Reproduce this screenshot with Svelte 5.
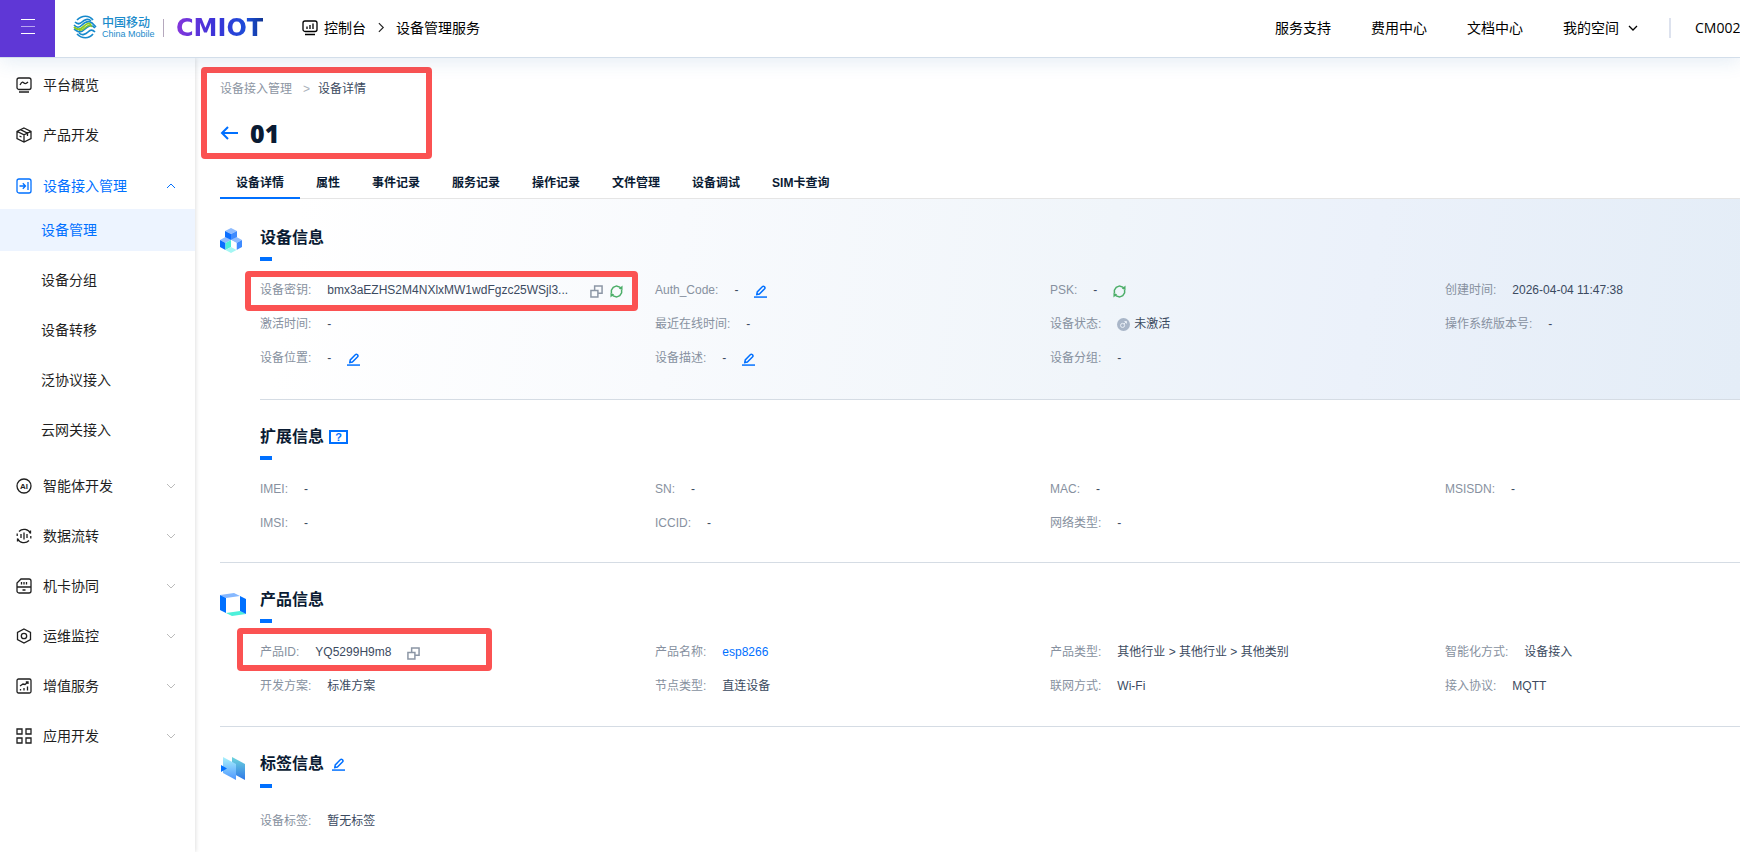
<script lang="ts">
	type NavItem = { label: string; icon: string; mark?: string };
	type Field = {
		label: string;
		value: string;
		actions?: string[];
		link?: boolean;
		status?: boolean;
		long?: boolean;
	};

	const topItems: NavItem[] = [
		{
			label: '平台概览',
			icon: 'M3 1h10a2 2 0 0 1 2 2v7.500a2 2 0 0 1-2 2H3a2 2 0 0 1-2-2V3a2 2 0 0 1 2-2zM3 15h10M4 8c2-4 3-3 4-2s2 1 4-1'
		},
		{
			label: '产品开发',
			icon: 'M8 1l7 3.400v7.200L8 15l-7-3.400V4.400zM1 4.400l7 3.400 7-3.400M8 7.800V15M4.500 2.700l7 3.400v3M3.500 9l2 1'
		}
	];

	const deviceIcon =
		'M3 1h10a2 2 0 0 1 2 2v10a2 2 0 0 1-2 2H3a2 2 0 0 1-2-2V3a2 2 0 0 1 2-2zM3.500 8H9M6.800 5.200L9.500 8l-2.700 2.800M12 4v8';
	const deviceItems = ['设备管理', '设备分组', '设备转移', '泛协议接入', '云网关接入'];

	const bottomItems: NavItem[] = [
		{ label: '智能体开发', icon: 'M8 1a7 7 0 1 1 0 14A7 7 0 0 1 8 1z', mark: 'AI' },
		{
			label: '数据流转',
			icon: 'M3 3.500A7 7 0 0 1 14.500 5.500V2.500M13 12.500A7 7 0 0 1 1.500 10.500v3M1.200 8V5.500M14.800 8v2.500M5 6v4M8 4.500v7M11 6v4'
		},
		{
			label: '机卡协同',
			icon: 'M5 1h8a2 2 0 0 1 2 2v10a2 2 0 0 1-2 2H3a2 2 0 0 1-2-2V5zM1 9h14M5.500 4v2.500M8 4v2.500M10.500 4v2.500M6.500 12h3'
		},
		{
			label: '运维监控',
			icon: 'M8 1l6.500 3.500v7L8 15l-6.500-3.500v-7zM8 5.300a2.700 2.700 0 1 1 0 5.400 2.700 2.700 0 0 1 0-5.400z'
		},
		{
			label: '增值服务',
			icon: 'M2.500 1h11A1.500 1.500 0 0 1 15 2.500v11a1.500 1.500 0 0 1-1.500 1.500h-11A1.500 1.500 0 0 1 1 13.500v-11A1.500 1.500 0 0 1 2.500 1zM4 8l3-2 2 .5L12 4M9.800 4H12v2M4.500 11v1.500M8 10v2.500M11.500 8.500v4'
		},
		{
			label: '应用开发',
			icon: 'M1 1h5v5H1zM10 1h5v5h-5zM1 10h5v5H1zM10 10h5v5h-5z'
		}
	];

	const tabs = [
		'设备详情',
		'属性',
		'事件记录',
		'服务记录',
		'操作记录',
		'文件管理',
		'设备调试',
		'SIM卡查询'
	];

	const deviceFields: Field[] = [
		{
			label: '设备密钥',
			value: 'bmx3aEZHS2M4NXlxMW1wdFgzc25WSjl3...',
			actions: ['copy', 'refresh'],
			long: true
		},
		{ label: 'Auth_Code', value: '-', actions: ['edit'] },
		{ label: 'PSK', value: '-', actions: ['refresh'] },
		{ label: '创建时间', value: '2026-04-04 11:47:38' },
		{ label: '激活时间', value: '-' },
		{ label: '最近在线时间', value: '-' },
		{ label: '设备状态', value: '未激活', status: true },
		{ label: '操作系统版本号', value: '-' },
		{ label: '设备位置', value: '-', actions: ['edit'] },
		{ label: '设备描述', value: '-', actions: ['edit'] },
		{ label: '设备分组', value: '-' }
	];

	const extendedFields: Field[] = [
		{ label: 'IMEI', value: '-' },
		{ label: 'SN', value: '-' },
		{ label: 'MAC', value: '-' },
		{ label: 'MSISDN', value: '-' },
		{ label: 'IMSI', value: '-' },
		{ label: 'ICCID', value: '-' },
		{ label: '网络类型', value: '-' }
	];

	const productFields: Field[] = [
		{ label: '产品ID', value: 'YQ5299H9m8', actions: ['copy'] },
		{ label: '产品名称', value: 'esp8266', link: true },
		{ label: '产品类型', value: '其他行业 > 其他行业 > 其他类别' },
		{ label: '智能化方式', value: '设备接入' },
		{ label: '开发方案', value: '标准方案' },
		{ label: '节点类型', value: '直连设备' },
		{ label: '联网方式', value: 'Wi-Fi' },
		{ label: '接入协议', value: 'MQTT' }
	];

	const tagFields: Field[] = [{ label: '设备标签', value: '暂无标签' }];

	const actionLabels: Record<string, string> = { copy: '复制', refresh: '刷新', edit: '编辑' };

	let activeTab = $state('设备详情');
	let activeItem = $state('设备管理');
	let deviceOpen = $state(true);
</script>

{#snippet navIcon(d: string, mark = '')}
	<svg class="nav-icon" viewBox="0 0 16 16" aria-hidden="true">
		<path {d} />
		{#if mark}<text x="8" y="11" text-anchor="middle">{mark}</text>{/if}
	</svg>
{/snippet}

{#snippet chevron(up: boolean)}
	<svg class="chevron" viewBox="0 0 10 10" aria-hidden="true">
		<path d={up ? 'M1 7l4-4 4 4' : 'M1 3l4 4 4-4'} />
	</svg>
{/snippet}

{#snippet action(kind: string)}
	<button class="action {kind}" type="button" aria-label={actionLabels[kind]}>
		<svg viewBox="0 0 14 14" aria-hidden="true">
			{#if kind === 'copy'}
				<path d="M5 5V1h8v8H9M1 5.800h7.500V13H1z" />
			{:else if kind === 'refresh'}
				<path d="M1.500 9V5.500L3.500 2.500 7 1l3.500 1.200 1.300 1.500M12.500 5v3.500l-2 3L7 13l-3.500-1.200-1.300-1.500" />
				<path class="solid" d="M13.500.5v5l-4-1.500zM.5 13.500v-5l4 1.500z" />
			{:else}
				<path d="M3 10.200l.5-2.800 5.700-5.700a1.200 1.200 0 0 1 1.700 0l.6.6a1.200 1.200 0 0 1 0 1.700L5.800 9.700z" />
				<path d="M0 13h14" />
			{/if}
		</svg>
	</button>
{/snippet}

{#snippet fieldList(fields: Field[])}
	<dl class="fields">
		{#each fields as field (field.label)}
			<div class="field">
				<dt>{field.label}:</dt>
				<dd>
					{#if field.status}
						<svg class="status" viewBox="0 0 14 14" aria-hidden="true">
							<circle cx="7" cy="7" r="7" fill="#a9b6c8" />
							<circle cx="6" cy="8" r="2.200" fill="none" stroke="#edf2f8" />
							<path d="M7.500 6.500L10 4M8 3.800h2.200V6" fill="none" stroke="#edf2f8" />
						</svg>
					{/if}
					{#if field.link}
						<a href="#product">{field.value}</a>
					{:else}
						<span class:long={field.long}>{field.value}</span>
					{/if}
					{#if field.actions}
						<span class="actions">
							{#each field.actions as kind (kind)}
								{@render action(kind)}
							{/each}
						</span>
					{/if}
				</dd>
			</div>
		{/each}
	</dl>
{/snippet}

<div class="page">
	<header class="topbar">
		<button class="burger" type="button" aria-label="菜单">
			<span></span><span></span><span></span>
		</button>

		<a class="brand" href="#home">
			<svg class="globe" viewBox="0 0 24 24" fill="none" aria-hidden="true">
				<g stroke="#1689cc" stroke-width="1.700">
					<path d="M4 5c5-5 12-5 16 0" />
					<path d="M1 10c3 3 5 3 8 0s6-5 10-2l4 4" />
					<path d="M2 7c3 3 5 2 7 0s6-4 9-1" />
					<path d="M22 17c-3-3-5-2-7 0s-6 4-9 1" />
					<path d="M4 19c5 5 12 5 16 0" />
					<path d="M1 14l3 2c3 2 5 1 8-2s6-5 10-1" />
				</g>
				<path d="M1 12c3 3 6 3 9 0s6-5 8-2" stroke="#8ac926" stroke-width="1.800" />
				<path d="M6 15c3 1 5-1 7-3s5-2 6 0" stroke="#8ac926" stroke-width="1.600" />
			</svg>
			<span class="brand-text">
				<span class="brand-cn">中国移动</span>
				<span class="brand-en">China Mobile</span>
			</span>
		</a>
		<span class="brand-rule"></span>
		<span class="cmiot">CMIOT</span>

		<nav class="location" aria-label="位置">
			<svg class="console" viewBox="0 0 16 16" aria-hidden="true">
				<path d="M3 1h10a2 2 0 0 1 2 2v6.500a2 2 0 0 1-2 2H3a2 2 0 0 1-2-2V3a2 2 0 0 1 2-2zM3 14.500h10M5 6.500V9M8 5v4M11 3.500V9" />
			</svg>
			<a href="#console">控制台</a>
			<svg class="next" viewBox="0 0 8 12" aria-hidden="true"><path d="M1 1l5 5-5 5" /></svg>
			<span>设备管理服务</span>
		</nav>

		<nav class="links" aria-label="链接">
			<a href="#support">服务支持</a>
			<a href="#billing">费用中心</a>
			<a href="#docs">文档中心</a>
			<button class="space" type="button">我的空间 {@render chevron(false)}</button>
		</nav>
		<span class="account">CM0020</span>
	</header>

	<div class="body">
		<nav class="sidebar" aria-label="主菜单">
			{#each topItems as item (item.label)}
				<button class="item" type="button">
					{@render navIcon(item.icon)}
					{item.label}
				</button>
			{/each}

			<div class="group">
				<button
					class="item current"
					type="button"
					aria-expanded={deviceOpen}
					onclick={() => (deviceOpen = !deviceOpen)}
				>
					{@render navIcon(deviceIcon)}
					设备接入管理
					{@render chevron(deviceOpen)}
				</button>
				{#if deviceOpen}
					<div class="children">
						{#each deviceItems as item (item)}
							<button
								class="child"
								class:active={item === activeItem}
								type="button"
								onclick={() => (activeItem = item)}>{item}</button
							>
						{/each}
					</div>
				{/if}
			</div>

			{#each bottomItems as item (item.label)}
				<button class="item" type="button" aria-expanded="false">
					{@render navIcon(item.icon, item.mark)}
					{item.label}
					{@render chevron(false)}
				</button>
			{/each}
		</nav>

		<main>
			<div class="head">
				<nav class="crumbs" aria-label="面包屑">
					<a href="#devices">设备接入管理</a>
					<span class="sep">&gt;</span>
					<span>设备详情</span>
				</nav>
				<div class="title">
					<button class="back" type="button" aria-label="返回">
						<svg viewBox="0 0 18 14" aria-hidden="true"><path d="M18 7H2M8 1L2 7l6 6" /></svg>
					</button>
					<h1>01</h1>
				</div>
				<span class="frame"></span>
			</div>

			<div class="tabs" role="tablist">
				{#each tabs as tab (tab)}
					<button
						class="tab"
						class:active={tab === activeTab}
						type="button"
						role="tab"
						aria-selected={tab === activeTab}
						onclick={() => (activeTab = tab)}>{tab}</button
					>
				{/each}
			</div>

			<section class="section device">
				<svg class="art" viewBox="0 0 26 26" aria-hidden="true">
					<path fill="#8ebcff" d="M11 1l6 3-6 3-6-3zM5.500 10l5.500 3-5.500 3L0 13zM16.500 10l5.500 3-5.500 3-5.500-3z" />
					<path fill="#0a6eff" d="M5 4l6 3v6l-6-3zM0 13l5.500 3v7L0 20z" />
					<path fill="#3f8bff" d="M17 4l-6 3v6l6-3zM22 13l-5.500 3v7l5.500-3z" />
					<path fill="#4df0da" d="M5.500 16l5.500-3v7l-5.500 3z" />
					<path fill="#fff" d="M11 13l5.500 3v7L11 20z" />
					<path fill="#a5f6f3" d="M11 20l5.500 3-5.500 3-5.500-3z" />
				</svg>
				<div class="content">
					<h2>设备信息</h2>
					{@render fieldList(deviceFields)}
				</div>
				<span class="frame"></span>
			</section>

			<section class="section extended">
				<div class="content">
					<h2>
						扩展信息
						<button class="help" type="button" aria-label="帮助">?</button>
					</h2>
					{@render fieldList(extendedFields)}
				</div>
			</section>

			<section class="section product">
				<svg class="art" viewBox="0 0 26 26" aria-hidden="true">
					<path fill="#86b8ff" d="M0 4l14-2 6 3-14 2z" />
					<path fill="#4df0da" d="M6 22l14-2 6 3-14 2z" />
					<path fill="#0070ff" d="M0 4l6 3v15l-6-3zM20 5l6 3v15l-6-3z" />
				</svg>
				<div class="content">
					<h2>产品信息</h2>
					{@render fieldList(productFields)}
				</div>
				<span class="frame"></span>
			</section>

			<section class="section tags">
				<svg class="art" viewBox="0 0 26 26" aria-hidden="true">
					<defs>
						<linearGradient id="sheet-front" x1="0" y1="0" x2="0" y2="1">
							<stop offset="0" stop-color="#aaf2fb" />
							<stop offset="1" stop-color="#4d96ff" />
						</linearGradient>
						<linearGradient id="sheet-back" x1="0" y1="0" x2="0" y2="1">
							<stop offset="0" stop-color="#6ed5dc" />
							<stop offset="1" stop-color="#2f78e8" />
						</linearGradient>
					</defs>
					<path fill="url(#sheet-back)" d="M12 2l13 7v16l-13-7z" />
					<path fill="url(#sheet-front)" d="M3 2l13 7v16L3 18z" />
					<path fill="#0070ff" d="M1 10l6 3.500L1 17z" />
				</svg>
				<div class="content">
					<h2>标签信息 {@render action('edit')}</h2>
					{@render fieldList(tagFields)}
				</div>
			</section>
		</main>
	</div>
</div>

<style>
	:global(body) {
		margin: 0;
		background: #fff;
	}

	.page {
		min-height: 100vh;
		display: flex;
		flex-direction: column;
		overflow: hidden;
		font-family: 'Liberation Sans', 'Noto Sans CJK SC', sans-serif;
		font-size: 12px;
		line-height: 18px;
		color: #3b4a60;
	}

	button {
		padding: 0;
		border: 0;
		background: none;
		font: inherit;
		color: inherit;
		cursor: pointer;
	}

	a {
		color: inherit;
		text-decoration: none;
	}

	svg {
		flex: none;
		display: block;
	}

	.topbar {
		position: relative;
		z-index: 2;
		display: flex;
		align-items: center;
		height: 57px;
		border-bottom: 1px solid #d3deea;
		background: #fff;
		box-shadow: 0 4px 18px rgba(40, 110, 170, 0.12);
		font-family: 'Open Sans', 'Noto Sans CJK SC', sans-serif;
		font-size: 14px;
		line-height: 20px;
		color: #000;
		white-space: nowrap;
	}

	.burger {
		display: flex;
		flex-direction: column;
		justify-content: center;
		align-items: center;
		gap: 6px;
		width: 55px;
		height: 57px;
		padding-bottom: 4px;
		background: #5f37d6;
	}

	.burger span {
		width: 14px;
		height: 1px;
		background: #fff;
	}

	.burger span:nth-child(2) {
		background: #b9a5f0;
	}

	.brand {
		display: flex;
		align-items: center;
		gap: 5px;
		margin-left: 18px;
		padding-bottom: 3px;
	}

	.globe {
		width: 24px;
		height: 24px;
	}

	.brand-text {
		display: grid;
		width: 50px;
		color: #1b8bcb;
	}

	.brand-cn {
		font-size: 12px;
		font-weight: 500;
		line-height: 13px;
	}

	.brand-en {
		font-family: 'Liberation Sans', sans-serif;
		font-size: 9px;
		line-height: 10px;
	}

	.brand-rule {
		width: 1px;
		height: 18px;
		margin: 0 12px 2px 11px;
		background: #b5a8bd;
	}

	.cmiot {
		width: 96px;
		padding-bottom: 2px;
		font-family: 'DejaVu Sans', sans-serif;
		font-size: 24px;
		font-weight: 700;
		line-height: 26px;
		background: linear-gradient(90deg, #8636dc, #3b33d8 40%, #1b4ed8 75%, #0b2568);
		background-clip: text;
		color: transparent;
	}

	.location {
		display: flex;
		align-items: center;
		margin-left: 30px;
		padding-bottom: 2px;
	}

	.console,
	.nav-icon {
		width: 16px;
		height: 16px;
		fill: none;
		stroke: currentColor;
		stroke-width: 1.3;
	}

	.console {
		margin-right: 6px;
	}

	.next {
		width: 7px;
		height: 11px;
		margin: 0 11px 0 12px;
		fill: none;
		stroke: #222;
		stroke-width: 1.3;
	}

	.links {
		display: flex;
		align-items: center;
		gap: 40px;
		margin-left: auto;
		padding-bottom: 2px;
	}

	.space {
		display: flex;
		align-items: center;
		gap: 9px;
	}

	.chevron {
		width: 10px;
		height: 10px;
		fill: none;
		stroke: currentColor;
		stroke-width: 1.3;
	}

	.account {
		width: 45px;
		margin: 0 0 2px 31px;
		padding-left: 24px;
		border-left: 2px solid #dde2ee;
		overflow: hidden;
	}

	.body {
		flex: 1;
		display: flex;
	}

	.sidebar {
		position: relative;
		z-index: 1;
		flex: none;
		width: 195px;
		padding-top: 6px;
		box-shadow: 1px 0 4px rgba(0, 0, 0, 0.12);
		background: #fff;
		font-size: 14px;
		line-height: 20px;
		color: #1f1f1f;
	}

	.item {
		display: flex;
		align-items: center;
		gap: 11px;
		width: 100%;
		height: 42px;
		margin-bottom: 8px;
		padding: 0 19px 0 16px;
	}

	.item .chevron {
		margin-left: auto;
		stroke: #bbb;
		stroke-width: 1;
	}

	.nav-icon text {
		font-size: 8px;
		font-weight: 700;
		fill: currentColor;
		stroke: none;
	}

	.group {
		padding: 1px 0 6px;
	}

	.item.current {
		margin-bottom: 2px;
		color: #0070ff;
	}

	.item.current .chevron {
		stroke: #0070ff;
	}

	.children {
		display: grid;
		gap: 8px;
		padding-bottom: 8px;
	}

	.child {
		height: 42px;
		padding-left: 41px;
		text-align: left;
	}

	.child.active {
		background: #edf4ff;
		color: #0070ff;
	}

	main {
		flex: 1;
		min-width: 0;
	}

	.head {
		position: relative;
		padding: 21px 0 0 25px;
	}

	.crumbs {
		display: flex;
		line-height: 20px;
	}

	.crumbs a {
		color: #8d96a3;
	}

	.sep {
		margin: 0 8px 0 11px;
		color: #a9b0ba;
	}

	.title {
		display: flex;
		align-items: center;
		gap: 12px;
		height: 32px;
		margin-top: 18px;
	}

	.back svg {
		width: 18px;
		height: 14px;
		fill: none;
		stroke: #0070ff;
		stroke-width: 2;
	}

	h1 {
		margin: 0;
		font-family: 'Open Sans', sans-serif;
		font-size: 25px;
		font-weight: 800;
		line-height: 32px;
		color: #0a1b33;
	}

	.frame {
		position: absolute;
		border: 6px solid #fb5252;
		border-radius: 4px;
		pointer-events: none;
	}

	.head .frame {
		top: 9px;
		left: 6px;
		width: 219px;
		height: 80px;
	}

	.device .frame {
		top: 72px;
		left: 25px;
		width: 381px;
		height: 28px;
	}

	.product .frame {
		top: 65px;
		left: 17px;
		width: 243px;
		height: 31px;
	}

	.tabs {
		display: flex;
		height: 50px;
		margin-left: 25px;
		box-shadow: inset 0 -1px #e5e5e5;
	}

	.tab {
		padding: 25px 16px 5px;
		border-bottom: 2px solid transparent;
		font-weight: 700;
		color: #0a1b33;
		white-space: nowrap;
	}

	.tab.active {
		border-color: #0070ff;
	}

	.section {
		position: relative;
		display: flex;
		margin-left: 25px;
	}

	.art {
		width: 26px;
		height: 26px;
		margin: 28px 14px 0 0;
	}

	.content {
		flex: 1;
		min-width: 0;
		padding: 25px 0 22px;
		border-bottom: 1px solid #d5dce4;
	}

	.device {
		background: linear-gradient(98deg, #fff 5%, #f8fafd 30%, #f0f5fa 58%, #ebf1fa 75%, #e4edf7);
	}

	.device .content {
		padding: 27px 0 24px;
	}

	.extended .content {
		padding-left: 40px;
	}

	/* the rule under the product block also runs below its picture */
	.product {
		border-bottom: 1px solid #d5dce4;
	}

	.product .content {
		padding-bottom: 23px;
		border-bottom: 0;
	}

	.tags .content {
		padding-bottom: 10px;
		border-bottom: 0;
	}

	h2 {
		display: flex;
		align-items: center;
		gap: 5px;
		margin: 0;
		font-size: 16px;
		font-weight: 700;
		line-height: 24px;
		color: #0a1b33;
	}

	.help {
		width: 19px;
		height: 14px;
		border: 2px solid #0070ff;
		font-size: 11px;
		line-height: 10px;
		color: #0070ff;
	}

	.tags h2 {
		gap: 8px;
	}

	.fields {
		display: grid;
		grid-template-columns: repeat(4, minmax(395px, 1fr));
		margin: 0;
	}

	.fields::before {
		content: '';
		grid-column: 1 / -1;
		width: 12px;
		height: 4px;
		margin: 7px 0 12px;
		background: #0070ff;
	}

	.tags .fields::before {
		margin: 8px 0 16px;
	}

	.field {
		display: flex;
		align-items: center;
		gap: 16px;
		height: 34px;
		white-space: nowrap;
	}

	dt {
		color: #8791a0;
	}

	dd {
		display: flex;
		align-items: center;
		margin: 0;
	}

	dd a {
		color: #0070ff;
	}

	.long {
		min-width: 247px;
	}

	.status {
		width: 13px;
		height: 13px;
		margin-right: 4px;
	}

	.actions {
		display: flex;
		gap: 7px;
		margin-left: 16px;
		padding-top: 3px;
	}

	.action svg {
		width: 13px;
		height: 13px;
		fill: none;
		stroke: currentColor;
		stroke-width: 1.6;
	}

	.action .solid {
		fill: currentColor;
		stroke: none;
	}

	.copy {
		color: #8c96a5;
	}

	.refresh {
		color: #4cae68;
	}

	.edit {
		color: #0070ff;
	}
</style>
